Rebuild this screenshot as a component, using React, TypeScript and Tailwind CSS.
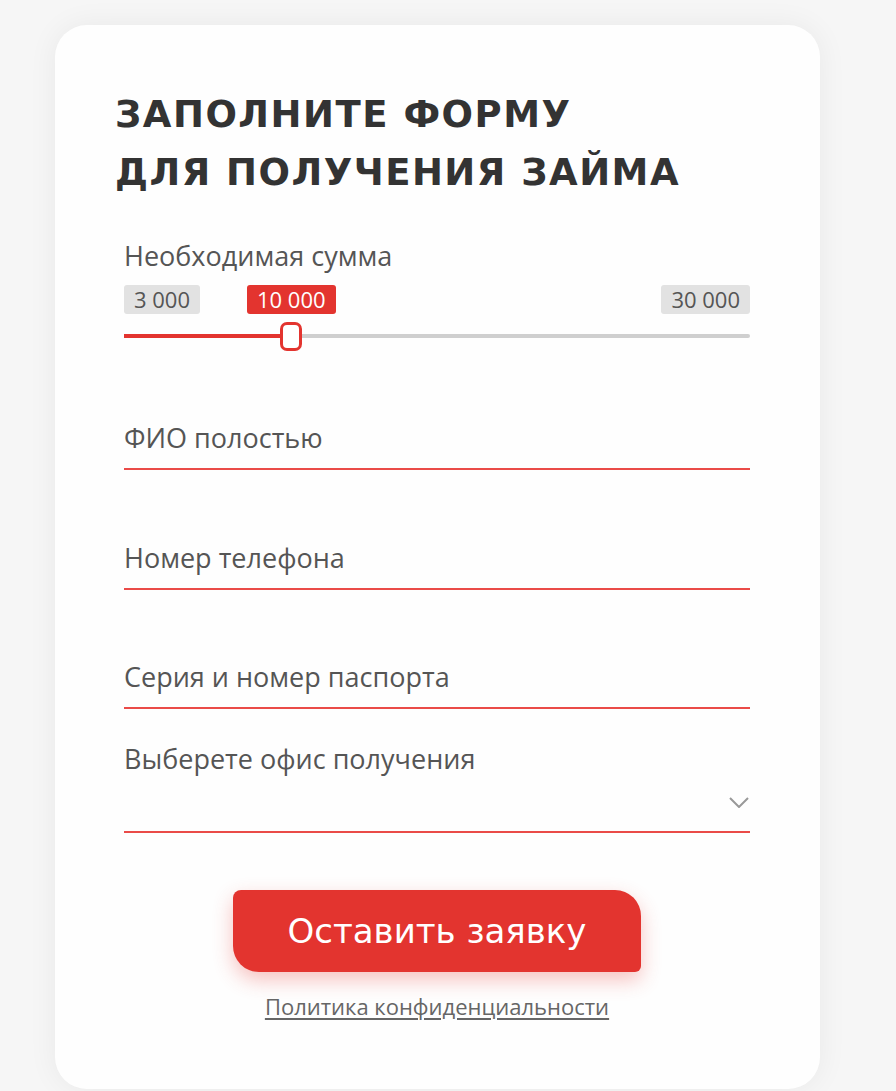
import React from "react"

function Field({ label, className = "" }: { label: string; className?: string }) {
  return (
    <div className={`border-b-2 border-[#ea4b48] ${className}`}>
      <div className="pb-[12px] text-[27px] leading-[36px] text-[#555]">{label}</div>
    </div>
  )
}

export default function App() {
  return (
    <div className="min-h-[1091px] bg-[#f6f6f6] pt-[25px] font-['Open_Sans',sans-serif]">
      <div className="ml-[55px] w-[765px] rounded-[32px] bg-[#fefefe] pb-[68px] pl-[60px] pr-[70px] pt-[61px] shadow-[0_0_30px_rgba(0,0,0,0.06)]">
        <h2 className="font-['DejaVu_Sans',sans-serif] text-[37px] font-bold uppercase leading-[58px] tracking-[1.5px] text-[#333]">
          Заполните форму
          <br />
          для получения займа
        </h2>

        <div className="ml-[9px] mt-[36px]">
          <div className="text-[27px] leading-[36px] text-[#555]">Необходимая сумма</div>
          <div className="relative mt-[11px] h-[29px]">
            <span className="absolute left-0 top-0 rounded-[3px] bg-[#e2e2e2] px-[10px] text-[22px] leading-[29px] text-[#555]">
              3 000
            </span>
            <span className="absolute left-[123px] top-0 rounded-[3px] bg-[#e3342f] px-[10px] text-[22px] leading-[29px] text-white">
              10 000
            </span>
            <span className="absolute right-0 top-0 rounded-[3px] bg-[#e2e2e2] px-[10px] text-[22px] leading-[29px] text-[#555]">
              30 000
            </span>
          </div>
          <div className="relative mt-[20px] h-[4px] rounded-full bg-[#cfcfcf]">
            <div className="absolute left-0 top-0 h-[4px] w-[160px] bg-[#e3342f]" />
            <div className="absolute left-[156px] top-[-12px] h-[29px] w-[22px] rounded-[7px] border-[3px] border-[#e3342f] bg-white" />
          </div>

          <Field label="ФИО полостью" className="mt-[82px]" />
          <Field label="Номер телефона" className="mt-[70px]" />
          <Field label="Серия и номер паспорта" className="mt-[69px]" />

          <div className="mt-[32px] border-b-2 border-[#ea4b48]">
            <div className="text-[27px] leading-[36px] text-[#555]">Выберете офис получения</div>
            <div className="flex h-[54px] items-center justify-end pb-[4px] pr-[1px]">
              <svg width="20" height="11" viewBox="0 0 20 11" fill="none">
                <path d="M1 1l9 9 9-9" stroke="#999" strokeWidth="2" />
              </svg>
            </div>
          </div>

          <div className="mt-[57px] flex flex-col items-center">
            <button className="flex h-[82px] w-[408px] items-center justify-center rounded-bl-[26px] rounded-br-[6px] rounded-tl-[8px] rounded-tr-[26px] bg-[#e3342f] font-['DejaVu_Sans',sans-serif] text-[34px] text-white shadow-[0_8px_20px_rgba(227,52,47,0.3)]">
              Оставить заявку
            </button>
            <a className="mt-[19px] text-[22px] leading-[30px] text-[#666] underline underline-offset-[3px]">
              Политика конфиденциальности
            </a>
          </div>
        </div>
      </div>
    </div>
  )
}
